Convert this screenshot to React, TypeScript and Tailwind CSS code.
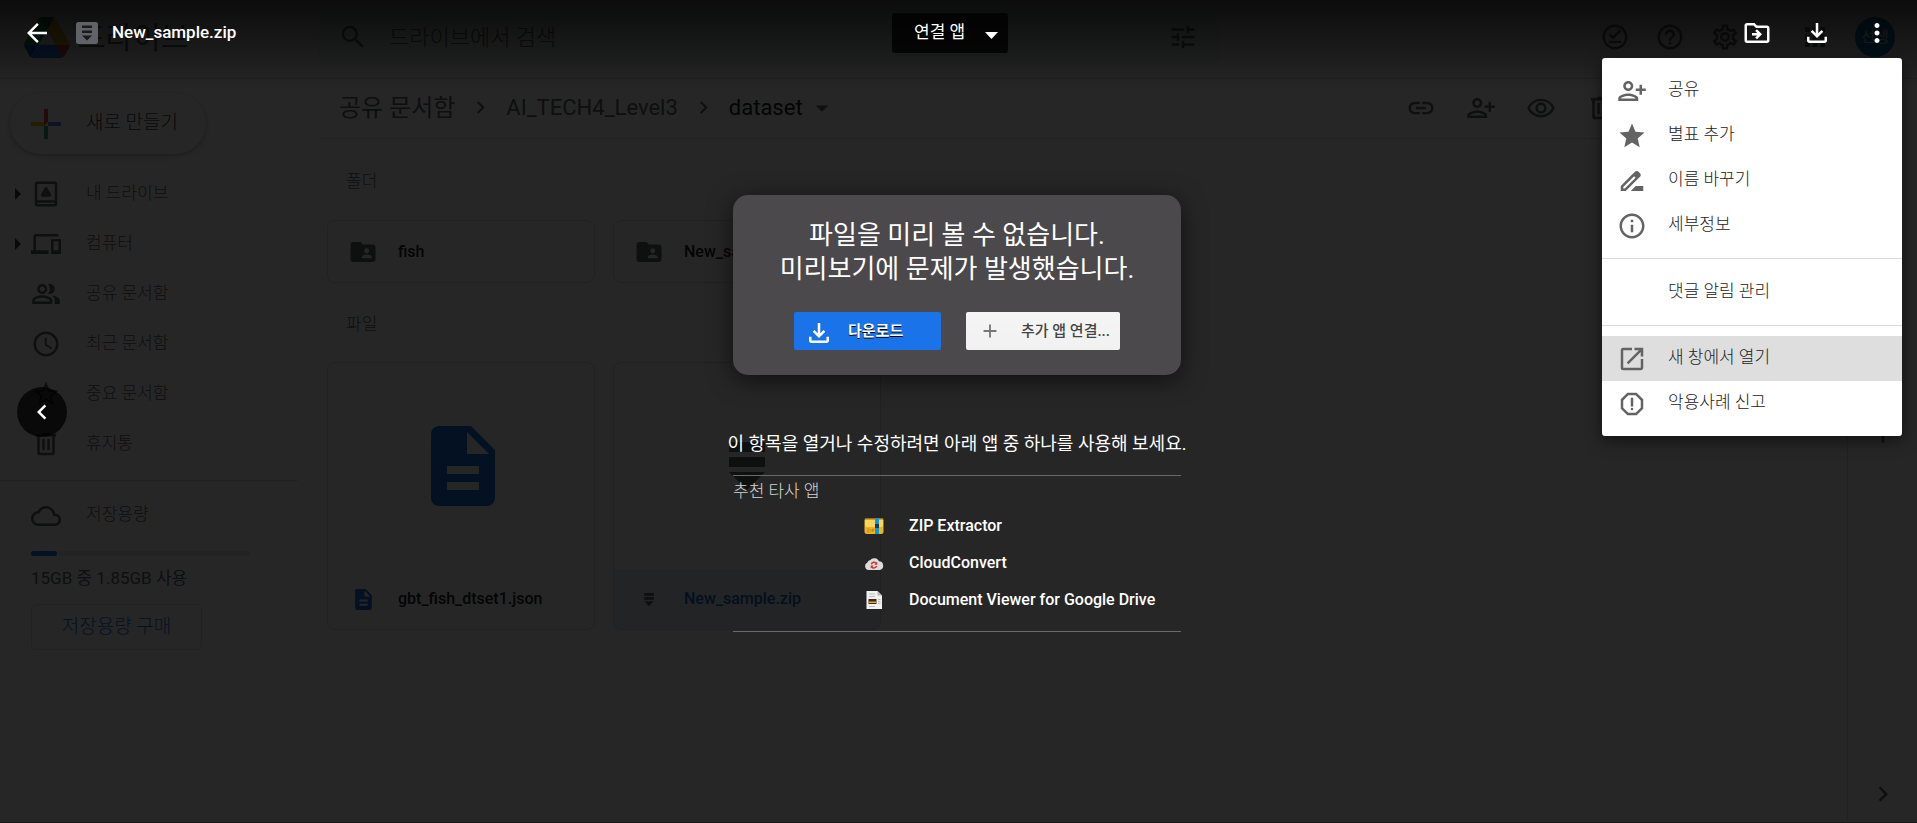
import type { ReactNode } from "react";
import type { IconType } from "react-icons";
import {
  MdAccessTime,
  MdAdd,
  MdApps,
  MdArrowBack,
  MdArrowDropDown,
  MdChevronLeft,
  MdChevronRight,
  MdDescription,
  MdDevices,
  MdDriveFileRenameOutline,
  MdFolderShared,
  MdHelpOutline,
  MdInfoOutline,
  MdLink,
  MdMoreVert,
  MdOpenInNew,
  MdOutlineCloud,
  MdOutlineDriveFileMove,
  MdOutlineFileDownload,
  MdOutlineOfflinePin,
  MdOutlinePeopleAlt,
  MdOutlinePersonAddAlt1,
  MdOutlineRemoveRedEye,
  MdOutlineReport,
  MdOutlineSettings,
  MdSearch,
  MdStar,
  MdStarBorder,
  MdTune,
} from "react-icons/md";

type IconProps = { className?: string };

function DriveLogo({ className }: IconProps) {
  return (
    <svg viewBox="0 0 87.3 78" className={className} aria-hidden="true">
      <path fill="#0066da" d="m6.6 66.85 3.85 6.65c.8 1.4 1.95 2.5 3.3 3.3l13.75-23.8h-27.5c0 1.55.4 3.1 1.2 4.5z" />
      <path fill="#00ac47" d="m43.65 25-13.75-23.8c-1.35.8-2.5 1.9-3.3 3.3l-25.4 44a9.06 9.06 0 0 0-1.2 4.5h27.5z" />
      <path fill="#ea4335" d="m73.55 76.8c1.35-.8 2.5-1.9 3.3-3.3l1.6-2.75 7.65-13.25c.8-1.4 1.2-2.95 1.2-4.5h-27.502l5.852 11.5z" />
      <path fill="#00832d" d="m43.65 25 13.75-23.8c-1.35-.8-2.9-1.2-4.5-1.2h-18.5c-1.6 0-3.15.45-4.5 1.2z" />
      <path fill="#2684fc" d="m59.8 53h-32.3l-13.75 23.8c1.35.8 2.9 1.2 4.5 1.2h50.8c1.6 0 3.15-.45 4.5-1.2z" />
      <path fill="#ffba00" d="m73.4 26.5-12.7-22c-.8-1.4-1.95-2.5-3.3-3.3l-13.75 23.8 16.15 28h27.45c0-1.55-.4-3.1-1.2-4.5z" />
    </svg>
  );
}

function PlusLogo({ className }: IconProps) {
  return (
    <svg viewBox="0 0 32 32" className={className} aria-hidden="true">
      <path fill="#ea4335" d="M14 1h4v13l-4 4z" />
      <path fill="#4285f4" d="M18 14h13v4H18z" />
      <path fill="#34a853" d="M14 18h4v13h-4z" />
      <path fill="#fbbc04" d="M1 14h13v4H1z" />
    </svg>
  );
}

function MyDriveIcon({ className }: IconProps) {
  return (
    <svg viewBox="0 0 24 24" fill="currentColor" className={className} aria-hidden="true">
      <path d="M19 2H5C3.9 2 3 2.9 3 4v16c0 1.1.9 2 2 2h14c1.1 0 2-.9 2-2V4c0-1.1-.9-2-2-2zm0 18H5v-1h14v1zm0-3H5V4h14v13z" />
      <path d="M12 7.8 9.2 12.9h5.6z" fill="none" stroke="currentColor" strokeWidth="2.6" strokeLinejoin="round" />
    </svg>
  );
}

function TrashIcon({ className }: IconProps) {
  return (
    <svg viewBox="0 0 24 24" fill="currentColor" className={className} aria-hidden="true">
      <path d="M15 4V3H9v1H4v2h1v13c0 1.1.9 2 2 2h10c1.1 0 2-.9 2-2V6h1V4h-5zm2 15H7V6h10v13zM9 8h2v9H9zm4 0h2v9h-2z" />
    </svg>
  );
}

function ZipMark({ className }: IconProps) {
  return (
    <svg viewBox="0 0 36 48" fill="currentColor" className={className} aria-hidden="true">
      <path d="M0 0h36v10H0zM0 15h36v10H0zM0 30h36L18 48z" />
    </svg>
  );
}

function ZipBadge({ className }: IconProps) {
  return (
    <svg viewBox="0 0 22 22" className={className} aria-hidden="true">
      <rect width="22" height="22" rx="2.5" fill="#5f6368" />
      <path d="M6 3.5h10V6H6zM6 8.5h10V11H6zM6 13.5h10L11 18.5z" fill="#1a1a1a" />
    </svg>
  );
}

function ZipExtractorIcon() {
  return (
    <svg viewBox="0 0 20 20" className="size-5" aria-hidden="true">
      <rect x="0.5" y="2" width="19" height="16" rx="2.5" fill="#efb420" />
      <rect x="1" y="3" width="18" height="8" rx="2" fill="#f9d65c" />
      <path d="M1 3.5Q1.5 2 3 2h14q1.5 0 2 1.5z" fill="#a36a12" />
      <rect x="11" y="2" width="4" height="16" fill="#1795cf" />
      <rect x="11" y="8" width="4" height="4" fill="#0b3c66" />
      <path d="M3 13h2.5L3 16h2.5M7 13v3M8.500 16v-3h1.500v1.500H8.500" fill="none" stroke="#b87f16" strokeWidth="0.7" />
    </svg>
  );
}

function CloudConvertIcon() {
  return (
    <svg viewBox="0 0 20 20" className="size-5" aria-hidden="true">
      <path d="M4 17a4 4 0 0 1-.6-7.500A3.500 3.500 0 0 1 6.500 7a5 5 0 0 1 8.500 1.200A4.500 4.500 0 0 1 16 17z" fill="#dcdcdc" />
      <path d="M7.300 11.200a3 3 0 0 1 5.200-.7M12.700 13a3 3 0 0 1-5.200.7" fill="none" stroke="#d0342f" strokeWidth="1.500" />
      <path d="M13.300 8.800v3h-3zM6.700 15.400v-3h3z" fill="#d0342f" />
    </svg>
  );
}

function DocumentViewerIcon() {
  return (
    <svg viewBox="0 0 20 20" className="size-5" aria-hidden="true">
      <path d="M2.500 1h11L18 5.500V19H2.500z" fill="#f1f1f1" />
      <path d="M13.500 1v4.500H18z" fill="#b5b5b5" />
      <path d="M5 4h6M5 6.500h6M5 16.500h6" stroke="#bdbdbd" strokeWidth="1" />
      <rect x="4.500" y="9" width="8" height="5" fill="#3a2a17" />
      <path d="M4.500 11.500h8V13h-8z" fill="#e8a33a" />
      <path d="M14 9.500h2.500M14 11.500h2.500M14 13.500h2.500" stroke="#bdbdbd" strokeWidth="1" />
    </svg>
  );
}

type NavEntry = { label: string; icon: ReactNode; expandable?: boolean };

const navEntries: NavEntry[] = [
  { label: "내 드라이브", icon: <MyDriveIcon className="size-[30px]" />, expandable: true },
  { label: "컴퓨터", icon: <MdDevices className="size-[30px]" />, expandable: true },
  { label: "공유 문서함", icon: <MdOutlinePeopleAlt className="size-[30px]" /> },
  { label: "최근 문서함", icon: <MdAccessTime className="size-[30px]" /> },
  { label: "중요 문서함", icon: <MdStarBorder className="size-[30px]" /> },
  { label: "휴지통", icon: <TrashIcon className="size-[30px]" /> },
];

function IconButton({ label, icon: Icon }: { label: string; icon: IconType }) {
  return (
    <button type="button" aria-label={label} className="shrink-0">
      <Icon className="size-[30px]" />
    </button>
  );
}

function DriveHeader() {
  return (
    <header className="flex h-[79px] items-center border-b border-[#dadce0] pr-[22px] pb-1">
      <div className="flex w-[318px] shrink-0 items-center gap-2 pl-6">
        <DriveLogo className="h-[41px] w-[46px]" />
        <span className="text-[30px] text-[#5f6368]">드라이브</span>
      </div>
      <div className="flex h-[58px] max-w-[902px] flex-1 items-center gap-[21px] rounded-[10px] bg-[#f1f3f4] pr-[22px] pl-5">
        <MdSearch className="size-[30px] shrink-0" />
        <input
          type="search"
          aria-label="드라이브에서 검색"
          placeholder="드라이브에서 검색"
          className="min-w-0 flex-1 bg-transparent text-[22px] font-light outline-none placeholder:text-[#5f6368]"
        />
        <MdTune className="size-[30px] shrink-0" />
      </div>
      <div className="ml-auto flex items-center gap-[25px]">
        <IconButton label="오프라인" icon={MdOutlineOfflinePin} />
        <IconButton label="지원" icon={MdHelpOutline} />
        <IconButton label="설정" icon={MdOutlineSettings} />
        <div className="ml-[35px] flex items-center gap-[25px]">
          <IconButton label="앱" icon={MdApps} />
          <button type="button" className="size-10 rounded-full bg-[#0288d1] text-[15px] text-white">
            선생
          </button>
        </div>
      </div>
    </header>
  );
}

function DriveSidebar() {
  return (
    <aside className="w-[318px] shrink-0 pt-[14px] text-[17px] text-[#5f6368]">
      <button
        type="button"
        className="mb-[15px] ml-[10px] flex h-[61px] w-[196px] items-center gap-6 rounded-full pl-5 text-[19px] font-light text-[#3c4043] shadow-[0_1px_3px_rgba(60,64,67,0.3),0_3px_6px_2px_rgba(60,64,67,0.12)]"
      >
        <PlusLogo className="size-8" />
        새로 만들기
      </button>
      <nav className="mr-5 border-b border-[#dadce0] pb-[11px]">
        {navEntries.map((entry) => (
          <a key={entry.label} href="#" className="flex h-[50px] items-center">
            <span className="flex w-[31px] justify-center pl-1">
              {entry.expandable && (
                <svg viewBox="0 0 6 12" className="h-3 w-[6px]" fill="#3c4043" aria-hidden="true">
                  <path d="M0 0l6 6-6 6z" />
                </svg>
              )}
            </span>
            {entry.icon}
            <span className="ml-[25px] font-light">{entry.label}</span>
          </a>
        ))}
      </nav>
      <div className="flex flex-col items-start pt-[10px] pl-[31px]">
        <a href="#" className="flex h-[50px] items-center gap-[25px]">
          <MdOutlineCloud className="size-[30px]" />
          <span className="pb-[2px] font-light">저장용량</span>
        </a>
        <div className="mt-[10px] flex h-[5px] w-[219px] gap-[2px]">
          <div className="w-[26px] rounded-full bg-[#1a73e8]" />
          <div className="flex-1 rounded-full bg-[#e8eaed]" />
        </div>
        <p className="mt-[10px] leading-6">15GB 중 1.85GB 사용</p>
        <button
          type="button"
          className="mt-[14px] h-[46px] w-[171px] rounded-[5px] border border-[#dadce0] text-[19px] font-light text-[#1a73e8]"
        >
          저장용량 구매
        </button>
      </div>
    </aside>
  );
}

function FolderCard({ name }: { name: string }) {
  return (
    <button
      type="button"
      className="flex h-[63px] w-[268px] items-center gap-5 rounded-[8px] border border-[#dadce0] px-5 text-[16px] font-medium text-[#202124]"
    >
      <MdFolderShared className="size-[30px] shrink-0 text-[#5f6368]" />
      <span className="truncate">{name}</span>
    </button>
  );
}

function FileCard({
  name,
  preview,
  icon,
  selected,
}: {
  name: string;
  preview: ReactNode;
  icon: ReactNode;
  selected?: boolean;
}) {
  return (
    <button
      type="button"
      className="flex h-[268px] w-[268px] flex-col overflow-hidden rounded-[8px] border border-[#dadce0] text-[16px] font-medium"
    >
      <span className="flex w-full flex-1 items-center justify-center">{preview}</span>
      <span
        className={
          selected
            ? "flex h-[60px] w-full items-center gap-5 bg-[#e8f0fe] px-5 text-[#1967d2]"
            : "flex h-[60px] w-full items-center gap-5 px-5 text-[#202124]"
        }
      >
        <span className="flex w-[30px] justify-center">{icon}</span>
        <span>{name}</span>
      </span>
    </button>
  );
}

function DriveContent() {
  return (
    <main className="min-w-0 flex-1 text-[#5f6368]">
      <div className="flex h-[60px] items-center border-b border-[#dadce0] pr-[231px] pb-[2px] pl-[21px]">
        <nav className="flex items-center gap-[13px] text-[22px] whitespace-nowrap">
          <a href="#" className="text-[24px]">
            공유 문서함
          </a>
          <MdChevronRight className="size-[25px]" />
          <a href="#">AI_TECH4_Level3</a>
          <MdChevronRight className="size-[25px]" />
          <button type="button" className="flex items-center gap-1 text-[#202124]">
            dataset
            <MdArrowDropDown className="size-[30px] text-[#5f6368]" />
          </button>
        </nav>
        <div className="ml-auto flex items-center gap-[30px]">
          <IconButton label="링크" icon={MdLink} />
          <IconButton label="공유" icon={MdOutlinePersonAddAlt1} />
          <IconButton label="미리보기" icon={MdOutlineRemoveRedEye} />
          <button type="button" aria-label="삭제" className="shrink-0">
            <TrashIcon className="size-[30px]" />
          </button>
        </div>
      </div>
      <section className="pl-[9px]">
        <h2 className="flex h-[81px] items-center pt-1 pl-[19px] text-[17px] font-light">폴더</h2>
        <div className="flex gap-[18px]">
          <FolderCard name="fish" />
          <FolderCard name="New_sample" />
        </div>
      </section>
      <section className="pl-[9px]">
        <h2 className="flex h-[79px] items-center pt-1 pl-[19px] text-[17px] font-light">파일</h2>
        <div className="flex gap-[18px]">
          <FileCard
            name="gbt_fish_dtset1.json"
            preview={<MdDescription className="ml-1 size-24 text-[#1a73e8]" />}
            icon={<MdDescription className="size-[25px] text-[#1a73e8]" />}
          />
          <FileCard
            name="New_sample.zip"
            selected
            preview={<ZipMark className="h-12 w-9 text-[#5f6368]" />}
            icon={<ZipMark className="h-[13px] w-[10px] text-[#5f6368]" />}
          />
        </div>
      </section>
    </main>
  );
}

function DrivePage() {
  return (
    <div className="flex min-h-screen flex-col bg-white text-[#5f6368]">
      <DriveHeader />
      <div className="flex flex-1 border-b border-[#9aa0a6]">
        <DriveSidebar />
        <DriveContent />
        <aside className="flex w-[70px] shrink-0 flex-col items-center justify-between border-l border-[#dadce0] pt-[340px] pb-[13px]">
          <IconButton label="부가기능 설치하기" icon={MdAdd} />
          <IconButton label="측면 패널 숨기기" icon={MdChevronRight} />
        </aside>
      </div>
    </div>
  );
}

function ViewerBar() {
  return (
    <header className="flex h-[90px] items-start bg-linear-to-b from-black/70 to-transparent pr-[25px] pl-[22px] text-white">
      <div className="flex h-[66px] flex-1 items-center">
        <IconButton label="닫기" icon={MdArrowBack} />
        <ZipBadge className="ml-6 size-[22px]" />
        <h1 className="ml-[14px] text-[17px] font-medium">New_sample.zip</h1>
      </div>
      <div className="mr-[14px] flex h-[66px] items-center">
        <button
          type="button"
          className="flex h-10 w-[116px] items-center justify-between rounded-[3px] bg-black/80 pr-[10px] pl-[22px] text-[17px]"
        >
          연결 앱
          <svg viewBox="0 0 13 7" className="mt-1 h-[7px] w-[13px]" fill="currentColor" aria-hidden="true">
            <path d="M0 0h13L6.500 7z" />
          </svg>
        </button>
      </div>
      <div className="flex h-[66px] flex-1 items-center justify-end gap-[30px]">
        <IconButton label="이동" icon={MdOutlineDriveFileMove} />
        <IconButton label="다운로드" icon={MdOutlineFileDownload} />
        <IconButton label="추가 작업" icon={MdMoreVert} />
      </div>
    </header>
  );
}

function MenuItem({ label, icon: Icon, active }: { label: string; icon?: IconType; active?: boolean }) {
  return (
    <button
      type="button"
      role="menuitem"
      className={
        active
          ? "flex h-[45px] w-full items-center gap-[21px] bg-[#dedede] pl-[15px]"
          : "flex h-[45px] w-full items-center gap-[21px] pl-[15px]"
      }
    >
      <span className="size-[30px] text-[#636363]">{Icon && <Icon className="size-[30px]" />}</span>
      <span className="pb-[2px]">{label}</span>
    </button>
  );
}

function MoreMenu() {
  return (
    <div
      role="menu"
      className="absolute top-[58px] right-[15px] w-[300px] rounded-[3px] bg-white py-[10px] text-[17px] font-light text-[#222222] shadow-[0_5px_15px_rgba(0,0,0,0.5)]"
    >
      <MenuItem label="공유" icon={MdOutlinePersonAddAlt1} />
      <MenuItem label="별표 추가" icon={MdStar} />
      <MenuItem label="이름 바꾸기" icon={MdDriveFileRenameOutline} />
      <MenuItem label="세부정보" icon={MdInfoOutline} />
      <hr className="mt-[10px] mb-[11px] border-[#dadada]" />
      <MenuItem label="댓글 알림 관리" />
      <hr className="my-[10px] border-[#dadada]" />
      <MenuItem label="새 창에서 열기" icon={MdOpenInNew} active />
      <MenuItem label="악용사례 신고" icon={MdOutlineReport} />
    </div>
  );
}

const suggestedApps = [
  { name: "ZIP Extractor", icon: <ZipExtractorIcon /> },
  { name: "CloudConvert", icon: <CloudConvertIcon /> },
  { name: "Document Viewer for Google Drive", icon: <DocumentViewerIcon /> },
];

function PreviewError() {
  return (
    <div className="flex justify-center pt-[105px] pr-[3px] text-white">
      <div className="w-[448px]">
        <section className="flex h-[180px] flex-col items-center rounded-[15px] bg-[#4b494b] pt-[23px] shadow-[0_5px_25px_rgba(0,0,0,0.6)]">
          <h2 className="text-center text-[26px] leading-[34px] whitespace-nowrap">
            파일을 미리 볼 수 없습니다.
            <br />
            미리보기에 문제가 발생했습니다.
          </h2>
          <div className="mt-[26px] flex gap-[25px] text-[15px]">
            <button
              type="button"
              className="flex h-[38px] w-[147px] items-center gap-[14px] rounded-[2px] bg-[#1a73e8] pl-[10px] font-bold"
            >
              <MdOutlineFileDownload className="mt-1 size-[30px]" />
              <span className="[text-shadow:0_1px_0_#000]">다운로드</span>
            </button>
            <button
              type="button"
              className="flex h-[38px] w-[154px] items-center gap-[20px] rounded-[2px] bg-linear-to-b from-[#f5f5f5] to-[#f1f1f1] pl-[13px] font-medium text-[#444444]"
            >
              <MdAdd className="size-[22px] text-[#777777]" />
              추가 앱 연결...
            </button>
          </div>
        </section>
        <p className="mt-[54px] flex h-7 items-center justify-center text-[18px] whitespace-nowrap">
          이 항목을 열거나 수정하려면 아래 앱 중 하나를 사용해 보세요.
        </p>
        <section className="mt-[18px] border-y border-[#6a6a6a] pb-[13px]">
          <h3 className="text-[17px] leading-[31px] font-light text-[#d4d4d4]">추천 타사 앱</h3>
          <ul className="pl-[131px]">
            {suggestedApps.map((app) => (
              <li key={app.name}>
                <a
                  href="#"
                  className="flex h-[37px] items-center gap-[25px] text-[16px] font-medium whitespace-nowrap"
                >
                  {app.icon}
                  {app.name}
                </a>
              </li>
            ))}
          </ul>
        </section>
      </div>
    </div>
  );
}

export default function App() {
  return (
    <div className="relative min-h-screen overflow-hidden font-[Roboto,'Noto_Sans_CJK_KR',sans-serif]" lang="ko">
      <DrivePage />
      <div className="absolute inset-0 bg-black/85">
        <ViewerBar />
        <PreviewError />
        <button
          type="button"
          aria-label="이전"
          className="absolute top-1/2 left-[17px] flex size-[50px] -translate-y-1/2 items-center justify-center rounded-full bg-black/75 text-white"
        >
          <MdChevronLeft className="size-[30px]" />
        </button>
        <MoreMenu />
      </div>
    </div>
  );
}
